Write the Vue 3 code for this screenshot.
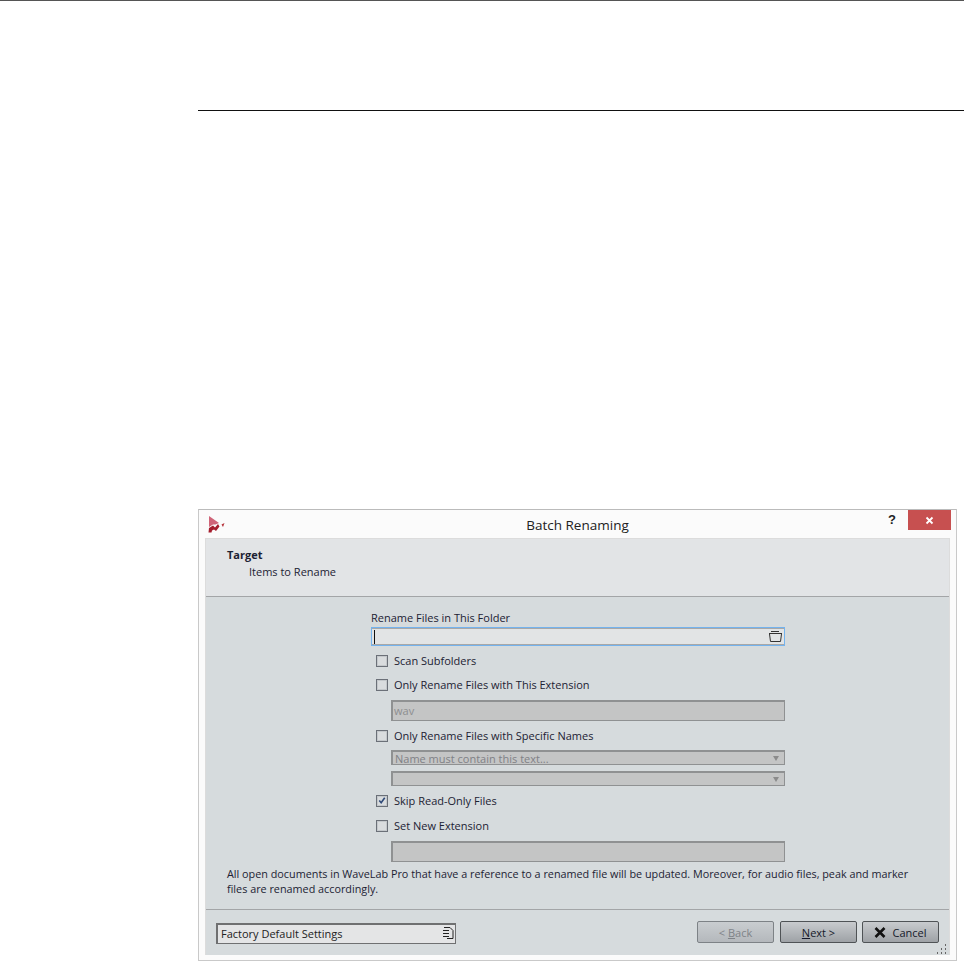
<template>
  <div class="page">
    <div class="top-rule"></div>
    <div class="section-rule"></div>

    <div class="dialog">
      <header class="titlebar">
        <svg class="logo" width="17" height="17" viewBox="0 0 17 17">
          <path d="M1 0 L11 7 L7.5 8.5 L5 8.5 L1 11 Z" fill="#cf6478" />
          <path d="M0.5 16.5 L1 12 L5 9.5 L7 11.5 L10 8 L11.5 10.5 L8 15 L6 13.5 L4 14.5 L3.5 16.5 Z" fill="#a51d2d" />
          <path d="M13.5 8.5 L16.5 7 L15 11 Z" fill="#b5323a" />
        </svg>
        <span class="title">Batch Renaming</span>
        <span class="help">?</span>
        <button class="close">
          <svg width="9" height="9" viewBox="0 0 9 9">
            <path d="M1.5 1.5 L7.5 7.5 M7.5 1.5 L1.5 7.5" stroke="#fff" stroke-width="1.8" />
          </svg>
        </button>
      </header>

      <div class="content">
        <div class="head">
          <div class="head-title">Target</div>
          <div class="head-sub">Items to Rename</div>
        </div>

        <div class="body">
          <div class="form">
            <div class="label">Rename Files in This Folder</div>
            <div class="folder-input">
              <span class="caret"></span>
              <svg class="folder" width="15" height="13" viewBox="0 0 15 13" fill="none" stroke="#333" stroke-width="1">
                <path d="M3 1.5 H11 M1 3.5 H14 M1.5 4 L2.5 11.5 H12.5 L13.5 4" />
              </svg>
            </div>

            <label class="check scan"><span class="box"></span>Scan Subfolders</label>
            <label class="check ext"><span class="box"></span>Only Rename Files with This Extension</label>
            <div class="disabled-input wav">wav</div>
            <label class="check names"><span class="box"></span>Only Rename Files with Specific Names</label>
            <div class="combo first">
              <span>Name must contain this text...</span>
              <i class="arrow"></i>
            </div>
            <div class="combo second"><i class="arrow"></i></div>
            <label class="check skip">
              <span class="box">
                <svg width="11" height="11" viewBox="0 0 11 11" fill="none">
                  <path d="M2.5 5.5 L4.6 8 L8.5 2.5" stroke="#2f4a78" stroke-width="1.8" />
                </svg>
              </span>
              Skip Read-Only Files
            </label>
            <label class="check newext"><span class="box"></span>Set New Extension</label>
            <div class="disabled-input last"></div>
          </div>

          <p class="note">
            All open documents in WaveLab Pro that have a reference to a renamed file will be updated. Moreover, for audio files, peak and marker files are renamed accordingly.
          </p>

          <div class="footer">
            <div class="preset">
              <span>Factory Default Settings</span>
              <svg width="12" height="14" viewBox="0 0 12 14" fill="none" stroke="#222" stroke-width="1">
                <path d="M2 1.5 H8 L11 4.5 V12.5 H5" />
                <path d="M1 4.5 H7 M1 7.5 H7 M1 10.5 H7" />
              </svg>
            </div>
            <div class="buttons">
              <button class="btn off"><span>&lt; <u>B</u>ack</span></button>
              <button class="btn"><span><u>N</u>ext &gt;</span></button>
              <button class="btn">
                <svg width="12" height="11" viewBox="0 0 12 11">
                  <path d="M1.5 1 L10.5 10 M10.5 1 L1.5 10" stroke="#111" stroke-width="2.6" />
                </svg>
                <span>Cancel</span>
              </button>
            </div>
          </div>
          <svg class="grip" width="12" height="10" viewBox="0 0 12 10" fill="#666">
            <rect x="9" y="0" width="1" height="2" /><rect x="5" y="4" width="1" height="2" /><rect x="9" y="4" width="1" height="2" />
            <rect x="1" y="8" width="1" height="2" /><rect x="5" y="8" width="1" height="2" /><rect x="9" y="8" width="1" height="2" />
          </svg>
        </div>
      </div>
    </div>
  </div>
</template>

<script setup>
</script>

<style>
html, body { background: #fff; }
</style>

<style scoped>
.page {
  width: 964px;
  height: 962px;
  position: relative;
  overflow: hidden;
  background: #fff;
  font-family: "Open Sans", "Noto Sans", sans-serif;
  font-size: 11px;
  color: #1c2233;
}
.top-rule {
  height: 1px;
  background: #555;
}
.section-rule {
  height: 1px;
  margin: 109px 0 0 198px;
  background: #111;
}
.dialog {
  box-sizing: border-box;
  width: 759px;
  height: 452px;
  margin: 398px 0 0 198px;
  padding: 0 6px 5px 6px;
  background: #fbfbfb;
  border: 1px solid #c9c9c9;
  border-top-color: #bbb;
  display: flex;
  flex-direction: column;
}
.titlebar {
  height: 28px;
  flex: none;
  display: flex;
  align-items: flex-start;
  position: relative;
}
.logo {
  margin: 6px 0 0 3px;
}
.title {
  position: absolute;
  left: 0;
  right: 0;
  top: 6px;
  text-align: center;
  font-size: 13.5px;
  color: #222;
}
.help {
  position: absolute;
  right: 54px;
  top: 2px;
  font-family: "Liberation Sans", sans-serif;
  font-size: 13px;
  font-weight: 700;
  color: #222;
}
.close {
  position: absolute;
  right: -1px;
  top: 0;
  width: 43px;
  height: 20px;
  border: 0;
  padding: 0;
  background: #c75050;
  display: flex;
  align-items: center;
  justify-content: center;
}
.content {
  flex: 1;
  display: flex;
  flex-direction: column;
  border: 1px solid #dcdcdc;
  border-bottom: 0;
  min-height: 0;
}
.head {
  box-sizing: border-box;
  height: 58px;
  flex: none;
  padding: 8px 0 0 21px;
  background: #e2e4e6;
  border-bottom: 1px solid #a3a5a7;
}
.head-title {
  font-weight: 700;
  line-height: 15px;
}
.head-sub {
  line-height: 15px;
  margin: 2px 0 0 22px;
}
.body {
  flex: 1;
  position: relative;
  background: #d6dbdd;
  display: flex;
  flex-direction: column;
}
.form {
  width: 414px;
  margin: 13px 0 0 165px;
  display: flex;
  flex-direction: column;
}
.label {
  line-height: 15px;
}
.folder-input {
  box-sizing: border-box;
  height: 19px;
  margin-top: 2px;
  border: 1px solid #74b3ee;
  background: #e2e4e5;
  box-shadow: inset 0 1px 0 #a8a8a8, inset 0 -1px 0 #a8a8a8;
  display: flex;
  align-items: center;
  justify-content: space-between;
  padding: 0 1px 0 2px;
}
.caret {
  width: 1px;
  height: 14px;
  background: #111;
}
.check {
  display: flex;
  align-items: center;
  gap: 6px;
  height: 15px;
  margin-left: 5px;
  line-height: 15px;
}
.box {
  box-sizing: border-box;
  width: 12px;
  height: 12px;
  flex: none;
  border: 1px solid #6b7078;
  background: #d9dcde;
  box-shadow: inset 0 0 0 1px #c4c8cb;
  display: flex;
  align-items: center;
  justify-content: center;
}
.scan { margin-top: 7px; }
.ext { margin-top: 9px; }
.names { margin-top: 7px; }
.skip { margin-top: 7px; }
.newext { margin-top: 10px; }
.disabled-input {
  box-sizing: border-box;
  height: 21px;
  margin-left: 20px;
  border: 1px solid #8f9192;
  border-top-width: 2px;
  border-left-width: 2px;
  background: #c4c5c5;
  color: #8d8e90;
  line-height: 18px;
  padding-left: 1px;
}
.wav { margin-top: 8px; }
.last { margin-top: 8px; }
.combo {
  box-sizing: border-box;
  height: 15px;
  margin-left: 20px;
  border: 1px solid #8f9192;
  border-top-width: 2px;
  border-left-width: 2px;
  background: #c4c5c5;
  color: #808186;
  line-height: 12px;
  padding: 1px 0 0 2px;
  display: flex;
  align-items: center;
  justify-content: space-between;
}
.first { margin-top: 7px; }
.second { margin-top: 6px; justify-content: flex-end; }
.arrow {
  width: 0;
  height: 0;
  margin-right: 5px;
  border-left: 3.5px solid transparent;
  border-right: 3.5px solid transparent;
  border-top: 5px solid #8b8b8b;
}
.note {
  width: 690px;
  margin: 4px 0 0 21px;
  font-size: 10.82px;
  line-height: 15px;
}
.footer {
  margin-top: 13px;
  padding: 11px 10px 0 10px;
  border-top: 1px solid #a3a5a7;
  display: flex;
  justify-content: space-between;
  align-items: flex-start;
}
.preset {
  box-sizing: border-box;
  width: 240px;
  height: 21px;
  margin-top: 2px;
  border: 1px solid #6f7071;
  border-top-width: 2px;
  border-left-width: 2px;
  background: #e4e5e6;
  color: #222;
  display: flex;
  align-items: center;
  justify-content: space-between;
  padding: 0 1px 2px 3px;
}
.buttons {
  display: flex;
  gap: 5px;
}
.btn {
  box-sizing: border-box;
  width: 77px;
  height: 22px;
  padding: 0;
  border: 1px solid #4f5356;
  border-radius: 2px;
  background: linear-gradient(#c8cbce, #9ea2a6);
  font: inherit;
  color: #15192a;
  display: flex;
  align-items: center;
  justify-content: center;
  gap: 6px;
}
.btn.off {
  margin-right: 1px;
  border-color: #7d8286;
  background: linear-gradient(#c9cdd0, #b4b8bc);
  color: #7f8388;
}
.grip {
  position: absolute;
  right: 1px;
  bottom: 1px;
}
</style>
